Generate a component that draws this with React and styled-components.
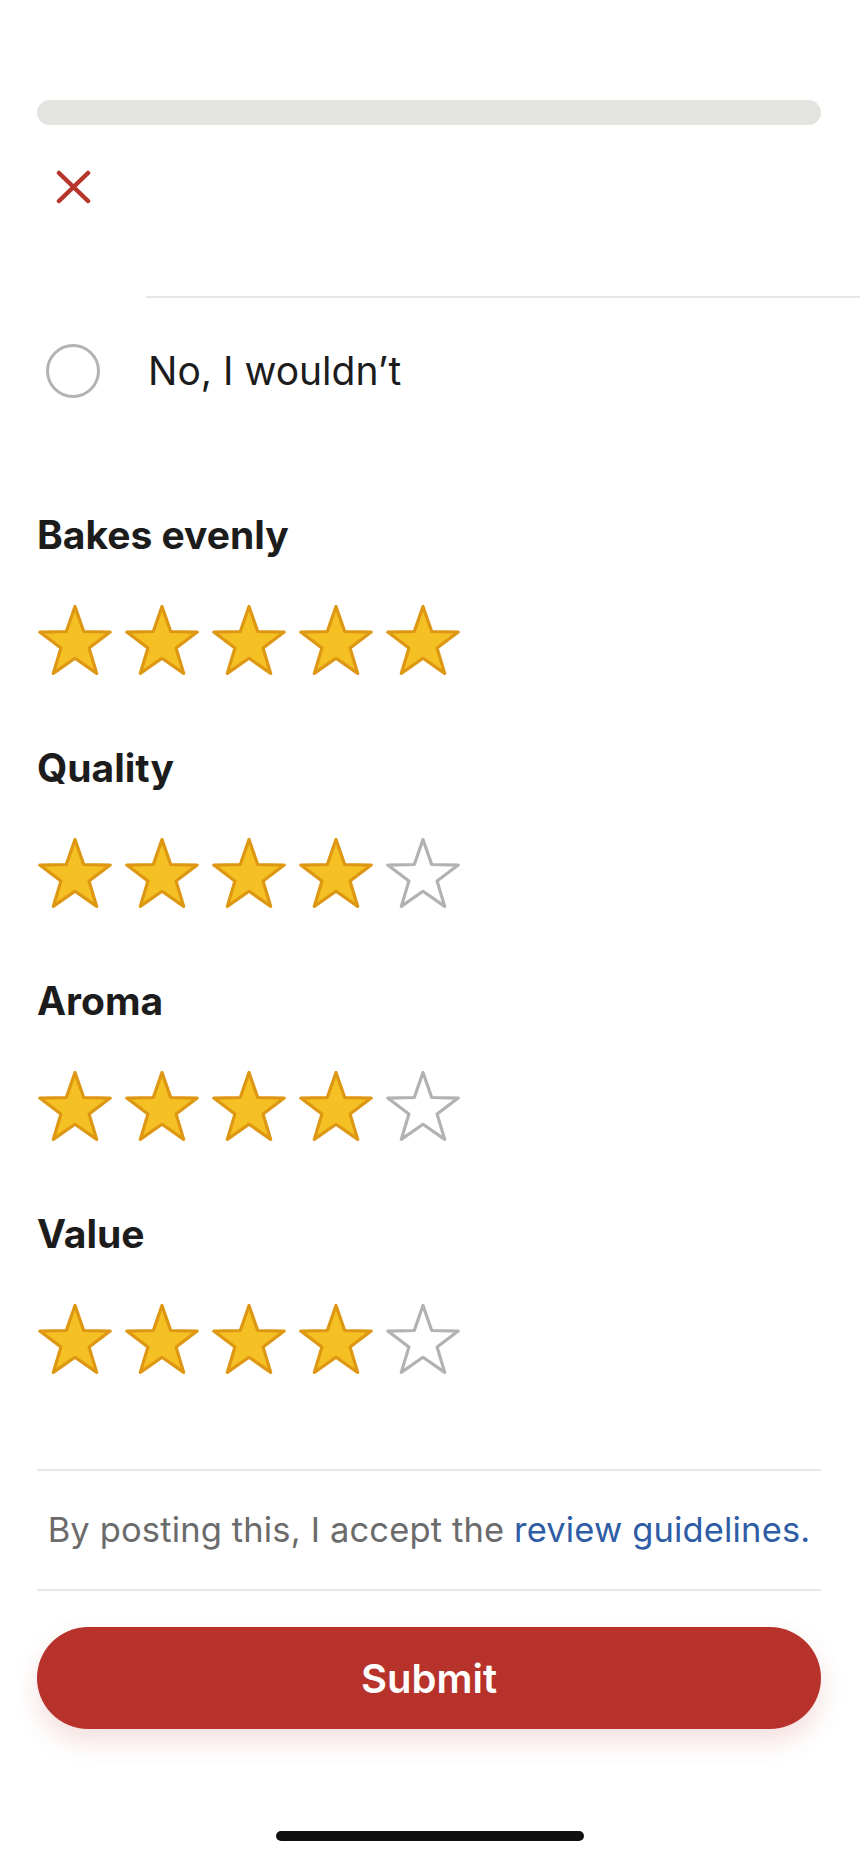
import React from "react";
import styled, { createGlobalStyle } from "styled-components";

const GlobalStyle = createGlobalStyle`
  html, body {
    margin: 0;
    padding: 0;
    background: #ffffff;
  }

  body {
    font-family: "Inter", "Noto Sans", sans-serif;
    color: #1c1c1c;
    -webkit-font-smoothing: antialiased;
  }
`;

const Page = styled.div`
  width: 860px;
  height: 1864px;
  box-sizing: border-box;
  padding: 100px 39px 0 37px;
  overflow: hidden;

  display: flex;
  flex-direction: column;
`;

const TopBar = styled.div`
  height: 25px;
  border-radius: 13px;
  background: #e3e3df;
`;

const OptionList = styled.div`
  margin-right: -39px;
  display: flex;
  flex-direction: column;
`;

const OptionRow = styled.div`
  display: flex;
  align-items: center;
  gap: 37px;
  padding-top: ${(props) => props.top}px;
  padding-bottom: ${(props) => props.bottom}px;
`;

const OptionIcon = styled.div`
  width: 72px;
  flex-shrink: 0;

  display: flex;
  justify-content: center;
  align-items: center;
`;

const OptionBody = styled.div`
  flex: 1;
  align-self: stretch;
  display: flex;
  align-items: center;
  padding-left: 2px;
`;

const Separator = styled.div`
  height: 2px;
  margin-left: 109px;
  background: #e7e7e7;
`;

const Radio = styled.div`
  width: 54px;
  height: 54px;
  box-sizing: border-box;
  border-radius: 50%;
  border: 3px solid #b3b3b3;
`;

const OptionLabel = styled.span`
  font-size: 39px;
  line-height: 54px;
  font-weight: 400;
  color: #1c1c1c;
`;

const Ratings = styled.div`
  margin-top: 114px;
  display: flex;
  flex-direction: column;
  gap: 68px;
`;

const RatingGroup = styled.section`
  display: flex;
  flex-direction: column;
  gap: 47px;
`;

const RatingTitle = styled.h3`
  margin: 0;
  font-size: 39px;
  line-height: 46px;
  font-weight: 700;
  color: #1c1c1c;
`;

const Stars = styled.div`
  display: flex;
  gap: 11px;
`;

const Divider = styled.div`
  height: 2px;
  background: #e8e8e8;
`;

const Disclaimer = styled.p`
  margin: 0;
  padding: 39px 0;
  text-align: center;
  font-size: 34.5px;
  line-height: 40px;
  letter-spacing: 0.15px;
  color: #6b6b6b;
`;

const GuideLink = styled.a`
  color: #2e5ca5;
  text-decoration: none;
`;

const SubmitButton = styled.button`
  margin-top: 36px;
  height: 102px;
  border: none;
  border-radius: 51px;
  background: #b8322c;
  box-shadow: 0 12px 26px rgba(184, 50, 44, 0.16);

  font-family: "Inter", sans-serif;
  font-size: 40px;
  font-weight: 600;
  color: #ffffff;
  cursor: pointer;
`;

const HomeIndicator = styled.div`
  align-self: center;
  margin: 102px 0 0 2px;
  width: 308px;
  height: 10px;
  border-radius: 5px;
  background: #111111;
`;

const STAR_POINTS =
  "38,1.5 46.7,26.5 73.2,27.1 52.1,43.1 59.7,68.4 38,53.3 16.3,68.4 23.9,43.1 2.8,27.1 29.3,26.5";

const Star = ({ filled }) => (
  <svg width="76" height="72" viewBox="0 0 76 72">
    <polygon
      points={STAR_POINTS}
      fill={filled ? "#f4c023" : "none"}
      stroke={filled ? "#de9713" : "#b2b2b2"}
      strokeWidth="3.2"
      strokeLinejoin="round"
    />
  </svg>
);

const CloseIcon = () => (
  <svg width="35" height="34" viewBox="0 0 35 34">
    <path
      d="M3 3 L32 31 M32 3 L3 31"
      stroke="#b7362c"
      strokeWidth="4.5"
      strokeLinecap="round"
    />
  </svg>
);

const ratings = [
  { label: "Bakes evenly", value: 5 },
  { label: "Quality", value: 4 },
  { label: "Aroma", value: 4 },
  { label: "Value", value: 4 },
];

const App = () => {
  return (
    <>
      <GlobalStyle />
      <Page>
        <TopBar />

        <OptionList>
          <OptionRow top={45} bottom={92}>
            <OptionIcon>
              <CloseIcon />
            </OptionIcon>
          </OptionRow>
          <Separator />
          <OptionRow top={46} bottom={0}>
            <OptionIcon>
              <Radio />
            </OptionIcon>
            <OptionBody>
              <OptionLabel>No, I wouldn’t</OptionLabel>
            </OptionBody>
          </OptionRow>
        </OptionList>

        <Ratings>
          {ratings.map((r) => (
            <RatingGroup key={r.label}>
              <RatingTitle>{r.label}</RatingTitle>
              <Stars>
                {[1, 2, 3, 4, 5].map((n) => (
                  <Star key={n} filled={n <= r.value} />
                ))}
              </Stars>
            </RatingGroup>
          ))}
        </Ratings>

        <Divider style={{ marginTop: 93 }} />
        <Disclaimer>
          By posting this, I accept the{" "}
          <GuideLink href="#">review guidelines.</GuideLink>
        </Disclaimer>
        <Divider />

        <SubmitButton>Submit</SubmitButton>

        <HomeIndicator />
      </Page>
    </>
  );
};

export default App;
